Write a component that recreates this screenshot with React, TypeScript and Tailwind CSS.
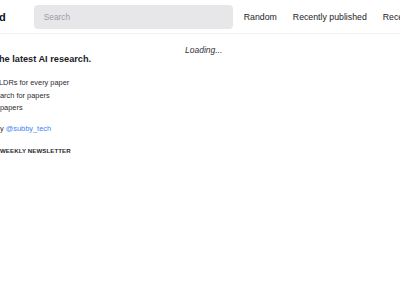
const font = { fontFamily: '"Liberation Sans", Arial, sans-serif' };

export default function App() {
  return (
    <div className="w-[400px] h-[300px] overflow-hidden bg-white text-[#222]" style={font}>
      {/* Header */}
      <header className="h-[34px] border-b border-[#f1f1f3] flex items-center whitespace-nowrap">
        <span className="shrink-0 ml-[-1px] pt-[1px] text-[11px] font-bold text-[#111] leading-none">d</span>
        <div className="shrink-0 ml-[28px] w-[199px] h-[24px] rounded-[4px] bg-[#e7e7ea] flex items-center pl-[10px]">
          <span className="pt-[1px] text-[8.3px] text-[#9a9ca2]">Search</span>
        </div>
        <nav className="shrink-0 ml-[11px] pt-[2px] flex items-center gap-[16px] text-[8.75px] text-[#222228]">
          <span>Random</span>
          <span>Recently published</span>
          <span>Recently added</span>
        </nav>
      </header>

      {/* Body */}
      <div className="flex">
        <aside className="w-[185px] shrink-0 pt-[19px] whitespace-nowrap">
          <h2 className="ml-[-1px] text-[9.2px] font-bold text-[#1b1b1f] leading-[12px]">he latest AI research.</h2>
          <ul className="mt-[12px] text-[7.4px] text-[#2b2b30] leading-[12.5px]">
            <li className="ml-[-1px]">LDRs for every paper</li>
            <li>arch for papers</li>
            <li>papers</li>
          </ul>
          <p className="mt-[8px] text-[7.4px] text-[#2b2b30] leading-[12px]">
            y <span className="text-[#3b82f6]">@subby_tech</span>
          </p>
          <p className="mt-[11px] text-[6.1px] font-bold tracking-[0.1px] text-[#26262b] uppercase leading-[10px]">
            Weekly newsletter
          </p>
        </aside>
        <main className="flex-1 pt-[10px]">
          <p className="text-[8.5px] italic text-[#333338] leading-[12px]">Loading...</p>
        </main>
      </div>
    </div>
  );
}
